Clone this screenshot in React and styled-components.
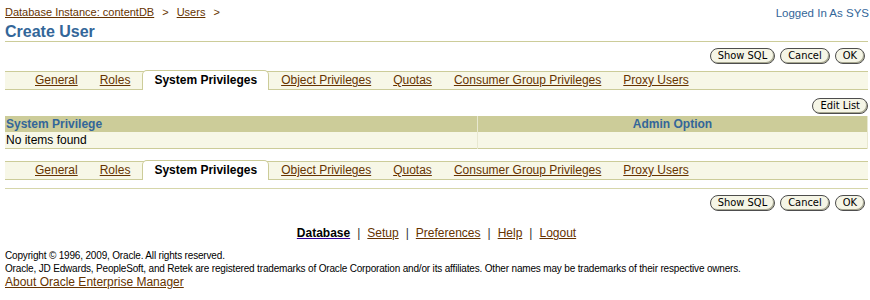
import React from 'react';
import styled, { createGlobalStyle } from 'styled-components';

const GlobalStyle = createGlobalStyle`
    body {
        margin: 0;
        background: #ffffff;
        font-family: "Liberation Sans", Arial, sans-serif;
        color: #000000;
    }
`;

const Page = styled.div`
    padding: 0 2px 0 5px;
`;

const TopBar = styled.div`
    display: flex;
    justify-content: space-between;
    align-items: flex-start;
    height: 22px;
    padding-top: 6px;
    box-sizing: border-box;
`;

const Crumbs = styled.div`
    font-size: 11px;
    line-height: 13px;
    color: #663300;
`;

const Link = styled.a`
    color: #663300;
    text-decoration: underline;
    cursor: pointer;
`;

const CrumbSep = styled.span`
    margin: 0 8px;
`;

const UserInfo = styled.div`
    font-size: 11.5px;
    line-height: 14px;
    color: #336699;
    margin-right: -1px;
`;

const Title = styled.h1`
    margin: 0;
    height: 19px;
    font-size: 16px;
    line-height: 19px;
    font-weight: bold;
    color: #336699;
    border-bottom: 1px solid #cccc99;
`;

const ButtonRow = styled.div`
    display: flex;
    justify-content: flex-end;
    gap: 5px;
    margin-top: ${({ top }) => top}px;
    padding-right: ${({ right }) => right ?? 3}px;
`;

const Button = styled.button`
    height: 16px;
    padding: 0 7px;
    border: 1px solid #4d4d4d;
    border-radius: 8px;
    background: #f5f5e6;
    box-shadow: inset -1px -1px 0 #a8a890;
    font-family: "DejaVu Sans Condensed", "DejaVu Sans", sans-serif;
    font-size: 11px;
    line-height: 14px;
    color: #000000;
    cursor: pointer;
`;

const TabBar = styled.div`
    display: flex;
    align-items: flex-end;
    height: 19px;
    margin-top: ${({ top }) => top}px;
    padding-left: 19px;
    box-sizing: border-box;
    background: #f7f7e7;
    border-top: 1px solid #cccc99;
    border-bottom: 1px solid #cccc99;
`;

const Tab = styled.div`
    padding: 0 11px;
    font-size: 12px;
    line-height: 17px;
    font-weight: ${({ active }) => (active ? 'bold' : 'normal')};
    color: ${({ active }) => (active ? '#000000' : '#663300')};
    text-decoration: ${({ active }) => (active ? 'none' : 'underline')};
    cursor: pointer;
    ${({ active }) => active && `
        height: 20px;
        line-height: 19px;
        margin: 0 1px -1px;
        box-sizing: border-box;
        background: #ffffff;
        border: 1px solid #cccc99;
        border-bottom: none;
        border-radius: 5px 5px 0 0;
    `}
`;

const Table = styled.table`
    width: 100%;
    margin-top: 2px;
    border-collapse: collapse;
    font-size: 12px;
    border-bottom: 1px solid #cccc99;
`;

const HeadCell = styled.th`
    height: 16px;
    padding: 0 1px;
    background: #cccc99;
    color: #336699;
    font-weight: bold;
    text-align: ${({ center }) => (center ? 'center' : 'left')};
    width: ${({ w }) => w};
    border-right: 1px solid #e8e8d0;
`;

const Cell = styled.td`
    height: 16px;
    padding: 0 1px;
    background: #f7f7e7;
    border-right: 1px solid #e8e8d0;
`;

const Divider = styled.div`
    margin-top: 8px;
    border-top: 1px solid #d6d6aa;
`;

const GlobalLinks = styled.div`
    display: flex;
    justify-content: center;
    margin-top: 15px;
    font-size: 12px;
    line-height: 14px;
`;

const Current = styled.span`
    font-weight: bold;
    color: #000000;
    text-decoration: underline;
    text-decoration-color: #330099;
`;

const Bar = styled.span`
    margin: 0 7px;
    color: #333333;
`;

const Legal = styled.div`
    margin-top: 9px;
    font-size: 10px;
    line-height: 13px;
    letter-spacing: -0.17px;
`;

const About = styled.div`
    font-size: 12px;
    line-height: 14px;
`;

const tabs = ['General', 'Roles', 'System Privileges', 'Object Privileges', 'Quotas', 'Consumer Group Privileges', 'Proxy Users'];

const Tabs = ({ top }) => (
    <TabBar top={top}>
        {tabs.map(t => (
            <Tab key={t} active={t === 'System Privileges'}>{t}</Tab>
        ))}
    </TabBar>
);

const Actions = ({ top }) => (
    <ButtonRow top={top}>
        <Button>Show SQL</Button>
        <Button>Cancel</Button>
        <Button>OK</Button>
    </ButtonRow>
);

const footerLinks = ['Setup', 'Preferences', 'Help', 'Logout'];

const App = () => (
    <Page>
        <GlobalStyle />
        <TopBar>
            <Crumbs>
                <Link>Database Instance: contentDB</Link>
                <CrumbSep>&gt;</CrumbSep>
                <Link>Users</Link>
                <CrumbSep>&gt;</CrumbSep>
            </Crumbs>
            <UserInfo>Logged In As SYS</UserInfo>
        </TopBar>
        <Title>Create User</Title>
        <Actions top={6} />
        <Tabs top={7} />
        <ButtonRow top={8} right={0}>
            <Button>Edit List</Button>
        </ButtonRow>
        <Table>
            <thead>
                <tr>
                    <HeadCell w="470px">System Privilege</HeadCell>
                    <HeadCell center>Admin Option</HeadCell>
                </tr>
            </thead>
            <tbody>
                <tr>
                    <Cell>No items found</Cell>
                    <Cell />
                </tr>
            </tbody>
        </Table>
        <Tabs top={12} />
        <Divider />
        <Actions top={6} />
        <GlobalLinks>
            <Current>Database</Current>
            {footerLinks.map(l => (
                <React.Fragment key={l}>
                    <Bar>|</Bar>
                    <Link>{l}</Link>
                </React.Fragment>
            ))}
        </GlobalLinks>
        <Legal>
            Copyright © 1996, 2009, Oracle. All rights reserved.<br />
            Oracle, JD Edwards, PeopleSoft, and Retek are registered trademarks of Oracle Corporation and/or its affiliates. Other names may be trademarks of their respective owners.
        </Legal>
        <About><Link>About Oracle Enterprise Manager</Link></About>
    </Page>
);

export default App;
